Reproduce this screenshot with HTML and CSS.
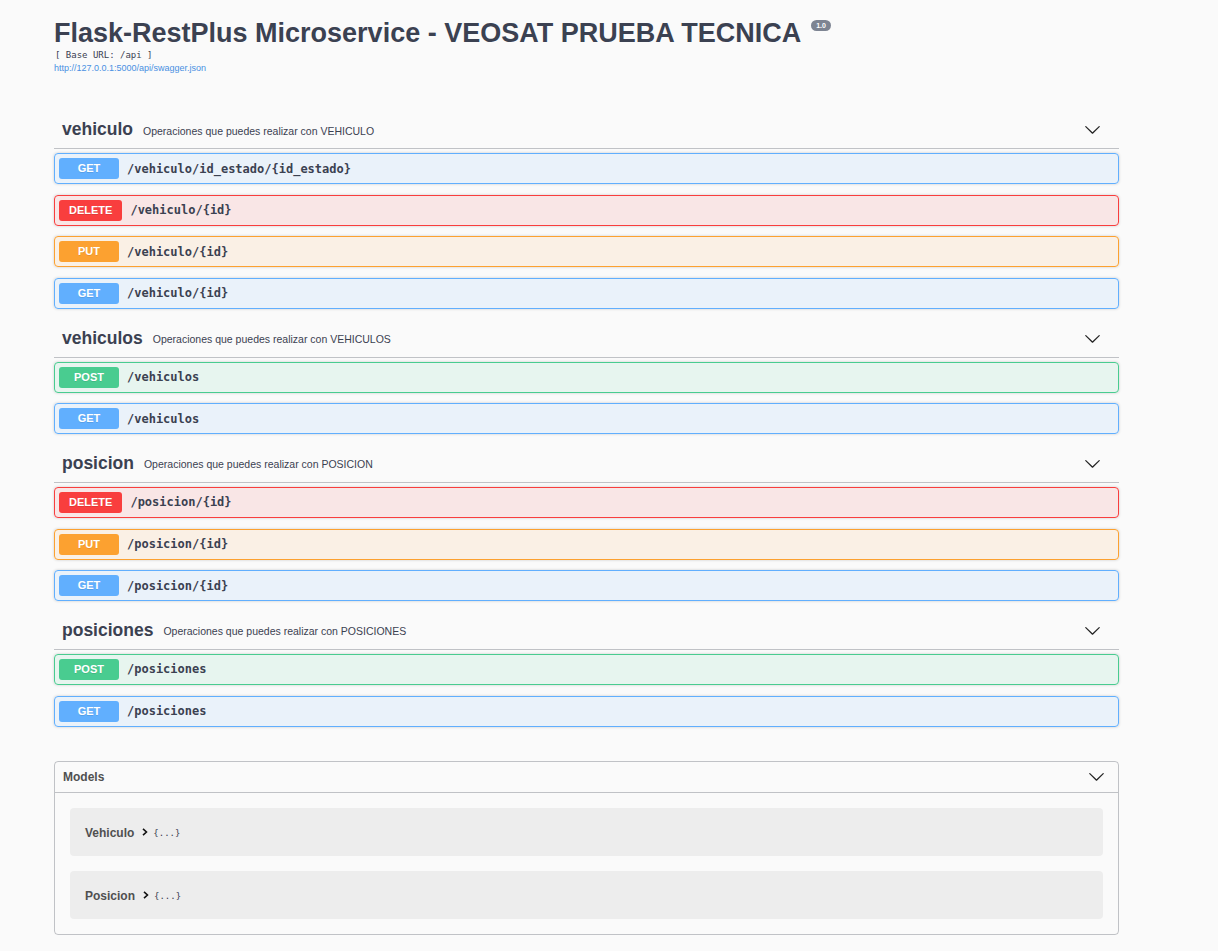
FILE: index.html
```html
<!DOCTYPE html>
<html>
<head>
<meta charset="utf-8">
<title>Flask-RestPlus Microservice</title>
<link rel="stylesheet" href="styles.css">
</head>
<body>
<div class="wrapper">
  <div class="info">
    <h2 class="title">Flask-RestPlus Microservice - VEOSAT PRUEBA TECNICA<span class="version">1.0</span></h2>
    <div class="base-url">[ Base URL: /api ]</div>
    <a class="spec-link" href="#">http://127.0.0.1:5000/api/swagger.json</a>
  </div>

  <div class="tag-section">
    <div class="tag-header">
      <span class="tag-name">vehiculo</span>
      <span class="tag-desc">Operaciones que puedes realizar con VEHICULO</span>
      <svg class="arrow" viewBox="0 0 20 20" width="17" height="17"><path d="M17.418 6.109c.272-.268.709-.268.979 0s.271.701 0 .969l-7.908 7.83c-.27.268-.707.268-.979 0l-7.908-7.83c-.27-.268-.27-.701 0-.969.271-.268.709-.268.979 0L10 13.25l7.418-7.141z"/></svg>
    </div>
    <div class="opblock get"><span class="method">GET</span><span class="path">/vehiculo/id_estado/{id_estado}</span></div>
    <div class="opblock delete"><span class="method">DELETE</span><span class="path">/vehiculo/{id}</span></div>
    <div class="opblock put"><span class="method">PUT</span><span class="path">/vehiculo/{id}</span></div>
    <div class="opblock get"><span class="method">GET</span><span class="path">/vehiculo/{id}</span></div>
  </div>

  <div class="tag-section">
    <div class="tag-header">
      <span class="tag-name">vehiculos</span>
      <span class="tag-desc">Operaciones que puedes realizar con VEHICULOS</span>
      <svg class="arrow" viewBox="0 0 20 20" width="17" height="17"><path d="M17.418 6.109c.272-.268.709-.268.979 0s.271.701 0 .969l-7.908 7.83c-.27.268-.707.268-.979 0l-7.908-7.83c-.27-.268-.27-.701 0-.969.271-.268.709-.268.979 0L10 13.25l7.418-7.141z"/></svg>
    </div>
    <div class="opblock post"><span class="method">POST</span><span class="path">/vehiculos</span></div>
    <div class="opblock get"><span class="method">GET</span><span class="path">/vehiculos</span></div>
  </div>

  <div class="tag-section">
    <div class="tag-header">
      <span class="tag-name">posicion</span>
      <span class="tag-desc">Operaciones que puedes realizar con POSICION</span>
      <svg class="arrow" viewBox="0 0 20 20" width="17" height="17"><path d="M17.418 6.109c.272-.268.709-.268.979 0s.271.701 0 .969l-7.908 7.83c-.27.268-.707.268-.979 0l-7.908-7.830c-.27-.268-.27-.701 0-.969.271-.268.709-.268.979 0L10 13.25l7.418-7.141z"/></svg>
    </div>
    <div class="opblock delete"><span class="method">DELETE</span><span class="path">/posicion/{id}</span></div>
    <div class="opblock put"><span class="method">PUT</span><span class="path">/posicion/{id}</span></div>
    <div class="opblock get"><span class="method">GET</span><span class="path">/posicion/{id}</span></div>
  </div>

  <div class="tag-section">
    <div class="tag-header">
      <span class="tag-name">posiciones</span>
      <span class="tag-desc">Operaciones que puedes realizar con POSICIONES</span>
      <svg class="arrow" viewBox="0 0 20 20" width="17" height="17"><path d="M17.418 6.109c.272-.268.709-.268.979 0s.271.701 0 .969l-7.908 7.83c-.27.268-.707.268-.979 0l-7.908-7.83c-.27-.268-.27-.701 0-.969.271-.268.709-.268.979 0L10 13.25l7.418-7.141z"/></svg>
    </div>
    <div class="opblock post"><span class="method">POST</span><span class="path">/posiciones</span></div>
    <div class="opblock get"><span class="method">GET</span><span class="path">/posiciones</span></div>
  </div>

  <section class="models">
    <div class="models-header">
      <span>Models</span>
      <svg class="arrow" viewBox="0 0 20 20" width="17" height="17"><path d="M17.418 6.109c.272-.268.709-.268.979 0s.271.701 0 .969l-7.908 7.83c-.27.268-.707.268-.979 0l-7.908-7.83c-.27-.268-.27-.701 0-.969.271-.268.709-.268.979 0L10 13.25l7.418-7.141z"/></svg>
    </div>
    <div class="models-body">
      <div class="model"><span class="model-name">Vehiculo</span><svg class="model-toggle" viewBox="0 0 10 10" width="8" height="8"><path d="M2.5 1.2 L6.8 5 L2.5 8.8" fill="none" stroke="#111" stroke-width="2"/></svg><span class="model-brace">{...}</span></div>
      <div class="model"><span class="model-name">Posicion</span><svg class="model-toggle" viewBox="0 0 10 10" width="8" height="8"><path d="M2.5 1.2 L6.8 5 L2.5 8.8" fill="none" stroke="#111" stroke-width="2"/></svg><span class="model-brace">{...}</span></div>
    </div>
  </section>
</div>
</body>
</html>
```

FILE: styles.css
```css
html, body {
  margin: 0;
  padding: 0;
  background: #fafafa;
}
body {
  font-family: "Liberation Sans", Arial, sans-serif;
  color: #3b4151;
}
.wrapper {
  width: 1065px;
  margin-left: 54px;
  padding-bottom: 40px;
}
.info {
  padding-top: 17px;
  margin-bottom: 36px;
}
.title {
  margin: 0;
  font-size: 27px;
  line-height: 33px;
  font-weight: bold;
  color: #3b4151;
  white-space: nowrap;
}
.version {
  display: inline-block;
  vertical-align: top;
  margin-left: 10px;
  margin-top: 3px;
  background: #7d8492;
  color: #fff;
  font-size: 7px;
  line-height: 11px;
  height: 11px;
  padding: 0 5px;
  border-radius: 6px;
  font-weight: bold;
}
.base-url {
  font-family: "DejaVu Sans Mono", monospace;
  font-size: 9px;
  line-height: 12px;
  margin-top: -1px;
  color: #3b4151;
  padding-left: 1px;
}
.spec-link {
  display: block;
  font-size: 9px;
  line-height: 13px;
  margin-top: 1px;
  color: #4990e2;
  text-decoration: none;
}
.tag-header {
  display: flex;
  align-items: center;
  height: 37px;
  padding: 0 18px 0 8px;
  border-bottom: 1px solid rgba(59, 65, 81, 0.3);
  margin-bottom: 4px;
}
.tag-name {
  font-size: 17.5px;
  font-weight: bold;
  color: #3b4151;
}
.tag-desc {
  font-size: 10.5px;
  margin-left: 10px;
  flex: 1;
  padding-top: 2px;
}
.arrow {
  fill: #222;
  display: block;
}
.opblock {
  display: flex;
  align-items: center;
  box-sizing: border-box;
  height: 31px;
  padding: 0 4px;
  border: 1px solid;
  border-radius: 4px;
  margin-bottom: 10.67px;
  box-shadow: 0 0 3px rgba(0, 0, 0, 0.19);
}
.method {
  min-width: 60px;
  box-sizing: border-box;
  height: 21px;
  line-height: 21px;
  padding: 0 10px;
  border-radius: 3px;
  text-align: center;
  color: #fff;
  font-size: 11px;
  font-weight: bold;
  text-shadow: 0 1px 0 rgba(0, 0, 0, 0.1);
}
.path {
  margin-left: 8px;
  font-family: "DejaVu Sans Mono", monospace;
  font-size: 12px;
  font-weight: bold;
  color: #3b4151;
}
.get { border-color: #61affe; background: rgba(97, 175, 254, 0.1); }
.get .method { background: #61affe; }
.delete { border-color: #f93e3e; background: rgba(249, 62, 62, 0.1); }
.delete .method { background: #f93e3e; }
.put { border-color: #fca130; background: rgba(252, 161, 48, 0.1); }
.put .method { background: #fca130; }
.post { border-color: #49cc90; background: rgba(73, 204, 144, 0.1); }
.post .method { background: #49cc90; }

.models {
  margin-top: 34px;
  border: 1px solid rgba(59, 65, 81, 0.3);
  border-radius: 4px;
}
.models-header {
  display: flex;
  align-items: center;
  justify-content: space-between;
  height: 30px;
  padding: 0 13px 0 8px;
  border-bottom: 1px solid rgba(59, 65, 81, 0.3);
  font-size: 12px;
  font-weight: bold;
  color: #505050;
}
.models-body {
  padding: 15px;
  display: flex;
  flex-direction: column;
  gap: 15px;
}
.model {
  display: flex;
  align-items: center;
  height: 48px;
  padding: 0 15px;
  background: rgba(0, 0, 0, 0.05);
  border-radius: 4px;
}
.model-name {
  font-size: 12px;
  font-weight: bold;
  color: #505050;
  padding-top: 2px;
}
.model-toggle {
  margin-left: 7px;
  margin-right: 4px;
}
.model-brace {
  font-family: "DejaVu Sans Mono", monospace;
  font-size: 9px;
  color: #3b4151;
  padding-top: 2px;
}
```
